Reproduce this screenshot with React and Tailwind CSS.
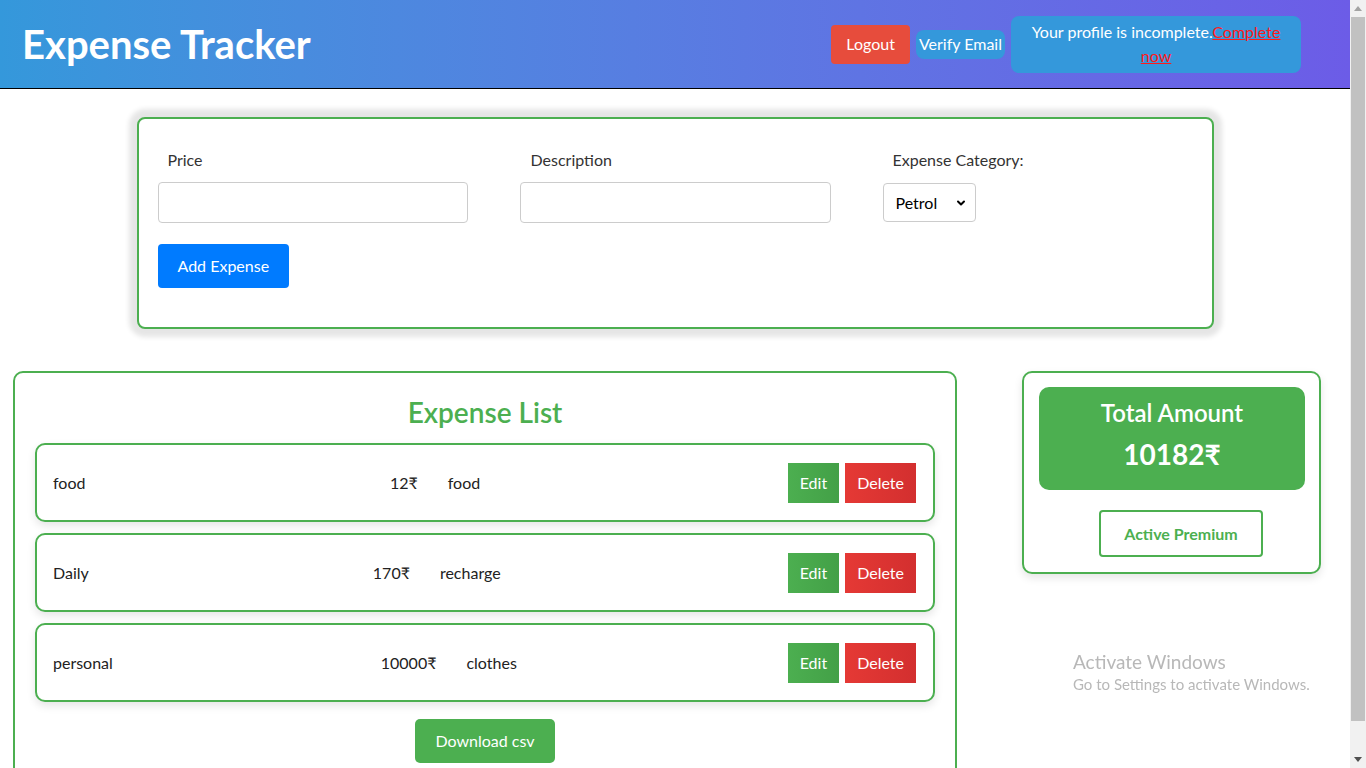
import { ChevronDown } from 'lucide-react';

const expenses = [
  { id: 1, description: 'food', amount: 12, category: 'food' },
  { id: 2, description: 'Daily', amount: 170, category: 'recharge' },
  { id: 3, description: 'personal', amount: 10000, category: 'clothes' },
];

function Header() {
  return (
    <header className="h-[89px] flex items-center justify-between border-b border-black bg-gradient-to-r from-[#3498db] to-[#6c5ce7]">
      <h1 className="ml-[22px] text-[40px] font-bold text-white leading-none">Expense Tracker</h1>
      <div className="flex items-center gap-[6px] mr-[49px]">
        <button className="h-[39px] px-[15px] bg-[#e74c3c] text-white text-[16px] rounded-[4px]">Logout</button>
        <button className="h-[29px] px-[3px] bg-[#3498db] text-white text-[16px] rounded-[8px]">Verify Email</button>
        <div className="w-[290px] h-[57px] pt-[4px] bg-[#3498db] rounded-[8px] text-white text-[16px] leading-[24px] text-center">
          Your profile is incomplete.<a href="#" className="text-[#ff1a1a] underline">Complete<br />now</a>
        </div>
      </div>
    </header>
  );
}

function ExpenseForm() {
  return (
    <div className="w-[1077px] mx-auto mt-[28px] rounded-[8px] border-2 border-[#4caf50] bg-white shadow-[0_0_5px_8px_rgba(0,0,0,0.1)] pt-[29px] px-[19px] pb-[39px]">
      <div className="flex gap-[52px]">
        <div className="w-[310px]">
          <label className="block pl-[10px] text-[16px] leading-[24px] text-[#333]">Price</label>
          <input type="number" className="mt-[10px] w-full h-[41px] border border-[#ccc] rounded-[4px] px-2" />
        </div>
        <div className="w-[311px]">
          <label className="block pl-[11px] text-[16px] leading-[24px] text-[#333]">Description</label>
          <input type="text" className="mt-[10px] w-full h-[41px] border border-[#ccc] rounded-[4px] px-2" />
        </div>
        <div>
          <label className="block pl-[10px] text-[16px] leading-[24px] text-[#333]">Expense Category:</label>
          <div className="relative mt-[11px] w-[93px]">
            <select className="appearance-none w-full h-[39px] border border-[#ccc] rounded-[4px] pl-[12px] text-[16px] text-black bg-white">
              <option>Petrol</option>
              <option>food</option>
              <option>recharge</option>
              <option>clothes</option>
            </select>
            <ChevronDown className="absolute right-[9px] top-[14px] w-[12px] h-[12px] text-black pointer-events-none" strokeWidth={4} />
          </div>
        </div>
      </div>
      <button className="mt-[21px] h-[44px] px-[20px] bg-[#007bff] text-white text-[16px] rounded-[4px]">Add Expense</button>
    </div>
  );
}

function ExpenseRow({ expense }) {
  return (
    <li className="h-[79px] flex items-center justify-between border-2 border-[#4caf50] rounded-[10px] bg-white pl-[16px] pr-[17px] shadow-[0_4px_8px_rgba(0,0,0,0.1)] text-[16px] text-[#222]">
      <span>{expense.description}</span>
      <span className="pr-[3px]">
        <span>{expense.amount}₹</span>
        <span className="ml-[30px]">{expense.category}</span>
      </span>
      <div className="flex gap-[6px]">
        <button className="h-[40px] px-[12px] bg-gradient-to-r from-[#4caf50] to-[#43a047] text-white">Edit</button>
        <button className="h-[40px] px-[12px] bg-gradient-to-r from-[#e53935] to-[#d32f2f] text-white">Delete</button>
      </div>
    </li>
  );
}

function ExpenseList() {
  return (
    <div className="w-[944px] border-2 border-[#4caf50] rounded-[10px] bg-white pt-[22px] px-[20px] pb-[22px]">
      <h2 className="text-center text-[28px] leading-[34px] font-semibold text-[#4caf50]">Expense List</h2>
      <ul className="mt-[14px] flex flex-col gap-[11px]">
        {expenses.map((e) => <ExpenseRow key={e.id} expense={e} />)}
      </ul>
      <div className="flex justify-center mt-[17px]">
        <button className="h-[44px] px-[20px] bg-[#4caf50] text-white text-[16px] rounded-[5px]">Download csv</button>
      </div>
    </div>
  );
}

function TotalCard() {
  const total = expenses.reduce((s, e) => s + e.amount, 0);
  return (
    <div className="w-[299px] self-start border-2 border-[#4caf50] rounded-[10px] bg-white pt-[14px] pl-[15px] pr-[14px] pb-[15px] shadow-[0_4px_8px_rgba(0,0,0,0.1)]">
      <div className="h-[103px] bg-[#4caf50] rounded-[10px] text-white text-center pt-[10px]">
        <div className="text-[24px] leading-[32px] font-semibold">Total Amount</div>
        <div className="mt-[8px] text-[28px] leading-[34px] font-bold">{total}₹</div>
      </div>
      <div className="flex justify-center pl-[18px] mt-[20px]">
        <button className="h-[47px] px-[23px] border-2 border-[#4caf50] rounded-[4px] bg-white text-[#4caf50] text-[16px] font-bold">Active Premium</button>
      </div>
    </div>
  );
}

function FakeScrollbar() {
  return (
    <div className="fixed top-0 right-0 w-[16px] h-screen bg-[#f1f1f1] flex flex-col items-center">
      <div className="h-[17px] w-full flex items-center justify-center">
        <svg width="8" height="5" viewBox="0 0 8 5"><path d="M0 5 L4 0 L8 5 Z" fill="#a3a3a3" /></svg>
      </div>
      <div className="flex-1 w-[14px] bg-[#c1c1c1] mb-[30px]" />
      <div className="h-[17px] w-full flex items-center justify-center">
        <svg width="8" height="5" viewBox="0 0 8 5"><path d="M0 0 L8 0 L4 5 Z" fill="#505050" /></svg>
      </div>
    </div>
  );
}

export default function App() {
  return (
    <div className="min-h-screen bg-white" style={{ fontFamily: 'Lato, "Noto Sans", sans-serif' }}>
      <div className="w-[1350px] pb-[20px]">
        <Header />
        <ExpenseForm />
        <div className="flex mt-[42px] ml-[13px] gap-[65px]">
          <ExpenseList />
          <TotalCard />
        </div>
      </div>
      <div className="fixed left-[1073px] top-[650px] pointer-events-none text-[#b8b8b8]">
        <div className="text-[19px] leading-[24px]">Activate Windows</div>
        <div className="text-[15px] leading-[20px]">Go to Settings to activate Windows.</div>
      </div>
      <FakeScrollbar />
    </div>
  );
}
